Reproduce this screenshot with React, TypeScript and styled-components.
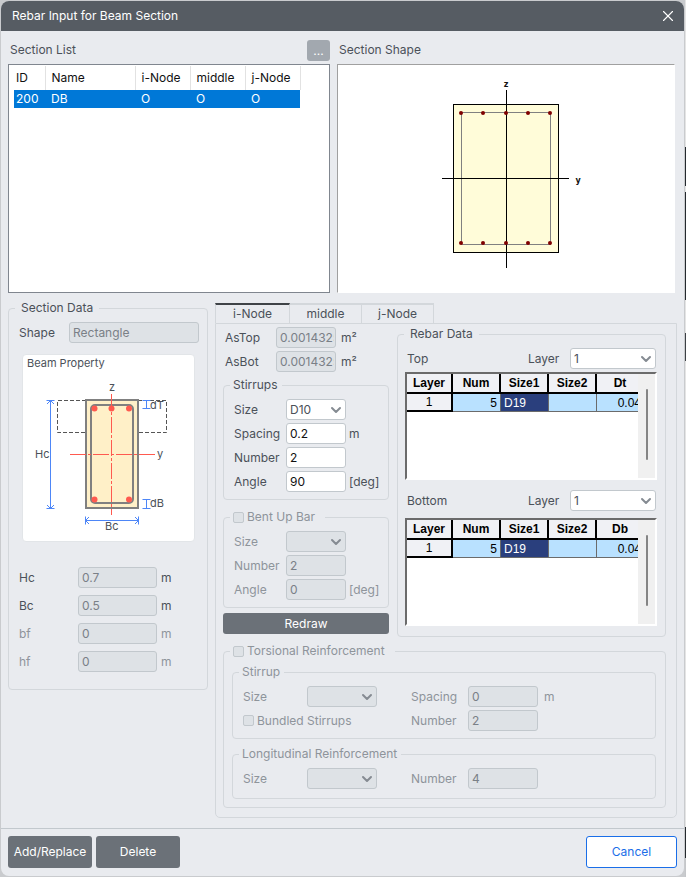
import React, { useId } from "react";
import styled, { createGlobalStyle } from "styled-components";
import { ChevronDown, X } from "lucide-react";

const color = {
  surface: "#e9ebef",
  title: "#565c63",
  text: "#4b5159",
  muted: "#8e949b",
  line: "#d3d7db",
  field: "#c2c8cd",
  fieldOff: "#dee2e6",
  button: "#6b7178",
  accent: "#1a6ee8",
};

const GlobalStyle = createGlobalStyle`
  *, *::before, *::after { box-sizing: border-box; }
  body {
    margin: 0;
    background: #c4c6c9;
    color: ${color.text};
    font: 12px/16px Inter, "Noto Sans", sans-serif;
  }
  button, input, select { font: inherit; color: inherit; }
`;

const Desktop = styled.div`
  min-height: 100vh;
  display: flex;
  padding: 1px 2px 1px 1px;
  background: linear-gradient(
      #e4e4e4 147px, #24292e 147px, #24292e 186px, #e4e4e4 186px, #e4e4e4 192px,
      #24292e 192px, #24292e 300px, #e4e4e4 300px, #e4e4e4 333px, #3c4045 333px,
      #3c4045 361px, #e4e4e4 361px, #e4e4e4 827px, #24292e 827px, #24292e 858px, #c4c6c9 858px
    ) right / 1px 100% no-repeat, #c9cbce;
`;

const Dialog = styled.main`
  flex: 1;
  min-width: 0;
  display: flex;
  flex-direction: column;
  background: ${color.surface};
  border-radius: 8px;
  overflow: hidden;
`;

const TitleBar = styled.header`
  height: 30px;
  display: flex;
  align-items: center;
  justify-content: space-between;
  padding: 0 7px 0 11px;
  background: ${color.title};
  color: #fff;
`;

const Heading = styled.h1`
  margin: 0;
  font-size: 12px;
  font-weight: 400;
`;

const CloseButton = styled.button`
  display: flex;
  padding: 0;
  border: 0;
  background: none;
`;

const Content = styled.div`
  flex: 1;
  display: flex;
  flex-direction: column;
  gap: 10px;
  padding: 9px 7px 9px 7px;
`;

const TopArea = styled.div`
  display: grid;
  grid-template-columns: 322fr 338fr;
  gap: 7px;
  padding-right: 2px;
`;

const Panel = styled.section`
  display: flex;
  flex-direction: column;
  gap: 3px;
  min-width: 0;
`;

const PanelHead = styled.div`
  height: 21px;
  display: flex;
  align-items: center;
  justify-content: space-between;
  padding-left: 2px;
`;

const PanelTitle = styled.h2`
  margin: 0;
  padding-bottom: 2px;
  font-size: 12px;
  font-weight: 400;
`;

const MoreButton = styled.button`
  width: 23px;
  height: 21px;
  padding: 0;
  border: 0;
  border-radius: 3px;
  background: #a2a8af;
  color: #fff;
`;

const ListBox = styled.div`
  height: 229px;
  padding: 1px 0 0 5px;
  border: 1px solid #80868f;
  background: #fff;
`;

const ListTable = styled.table`
  table-layout: fixed;
  width: 286px;
  border-collapse: collapse;
  color: #111;

  th, td {
    padding: 0 0 0 6px;
    font-weight: 400;
    text-align: left;
  }
  th { height: 24px; border-right: 1px solid #e2e2e2; }
  th:first-child, td:first-child { padding-left: 2px; }
  td { height: 18px; background: #0078d7; color: #fff; }
`;

const Column = styled.col<{ $w: number }>`
  width: ${(p) => p.$w}px;
`;

const ShapeBox = styled.div`
  height: 229px;
  border: 1px solid #fff;
  border-top-color: #a0a0a0;
  border-left-color: #a0a0a0;
  background: #fff;

  svg { display: block; width: 100%; height: 100%; }
`;

const LowerArea = styled.div`
  display: grid;
  grid-template-columns: 200px minmax(0, 1fr);
  align-items: start;
  gap: 7px;
`;

const Group = styled.fieldset<{ $muted?: boolean }>`
  min-width: 0;
  margin: 0;
  padding: 0;
  border: 1px solid ${color.line};
  border-radius: 4px;
  color: ${(p) => (p.$muted ? color.muted : color.text)};
`;

const GroupBody = styled.div<{ $pad: string }>`
  padding: ${(p) => p.$pad};
`;

const Legend = styled.legend<{ $left?: number; $right?: number }>`
  height: 16px;
  margin-left: 6px;
  padding: 0 ${(p) => p.$right ?? 4}px 0 ${(p) => p.$left ?? 3}px;
`;

const SectionColumn = styled.div`
  margin-top: -3px;
`;

const CheckLabel = styled.label`
  display: flex;
  align-items: center;
  gap: 3px;
  height: 16px;
`;

const CheckBox = styled.input`
  appearance: none;
  width: 11px;
  height: 11px;
  margin: 0;
  border: 1px solid ${color.field};
  border-radius: 2px;
  background: ${color.fieldOff};
`;

const Rows = styled.div<{ $gap?: number }>`
  display: flex;
  flex-direction: column;
  gap: ${(p) => p.$gap ?? 3}px;
`;

const Row = styled.div<{ $cols: string }>`
  display: grid;
  grid-template-columns: ${(p) => p.$cols};
  align-items: center;
  height: 21px;
  white-space: nowrap;
`;

const FieldLabel = styled.label<{ $muted?: boolean }>`
  ${(p) => p.$muted && `color: ${color.muted};`}
`;

const Unit = styled.span<{ $muted?: boolean; $gap?: number }>`
  padding-left: ${(p) => p.$gap ?? 3}px;
  ${(p) => p.$muted && `color: ${color.muted};`}
`;

const TextBox = styled.input`
  width: 100%;
  height: 21px;
  min-width: 0;
  padding: 0 1px 0 3px;
  border: 1px solid ${color.field};
  border-radius: 3px;
  background: #fff;
  color: #111;

  &:disabled { background: ${color.fieldOff}; color: #7a8087; }
`;

const SelectFrame = styled.span`
  display: grid;
  align-items: center;

  > * { grid-area: 1 / 1; }
  > svg {
    justify-self: end;
    margin-right: 2px;
    color: #858b92;
    pointer-events: none;
  }
`;

const SelectBox = styled.select`
  appearance: none;
  width: 100%;
  height: 21px;
  padding: 0 16px 0 3px;
  border: 1px solid ${color.field};
  border-radius: 3px;
  background: #fff;

  &:disabled { background: ${color.fieldOff}; opacity: 1; }
`;

const Card = styled.div`
  width: 173px;
  height: 188px;
  margin: 11px 0 25px 3px;
  border: 1px solid #e2e5e8;
  border-radius: 4px;
  background: #fff;

  svg { display: block; }
`;

const TabList = styled.div`
  display: flex;
  height: 20px;
`;

const Tab = styled.button<{ $active?: boolean }>`
  width: ${(p) => (p.$active ? 75 : 72)}px;
  padding: 0;
  border: 1px solid ${color.line};
  border-top: 2px solid ${(p) => (p.$active ? "#3f4347" : color.line)};
  border-bottom: 0;
  border-left-width: ${(p) => (p.$active ? 1 : 0)}px;
  background: ${color.surface};
`;

const TabPanel = styled.div`
  display: flex;
  flex-direction: column;
  gap: 6px;
  padding: 2px 10px 9px 7px;
  border: 1px solid ${color.line};
  border-radius: 0 0 5px 5px;
`;

const NodeArea = styled.div`
  display: grid;
  grid-template-columns: 166px minmax(0, 1fr);
  align-items: start;
  gap: 8px;
`;

const NodeColumn = styled.div`
  display: flex;
  flex-direction: column;
  padding-top: 1px;
`;

const AreaRows = styled(Rows)`
  padding-left: 2px;
  margin-bottom: 5px;
`;

const StirrupGroup = styled(Group)`
  margin-bottom: 9px;
`;

const RedrawButton = styled.button`
  height: 21px;
  margin-top: 5px;
  padding: 0;
  border: 0;
  border-radius: 3px;
  background: ${color.button};
  color: #fff;
`;

const LayerRow = styled(Row)`
  padding: 0 1px 0 2px;
`;

const Sheet = styled.div`
  display: flex;
  height: 108px;
  margin: 3px 0 10px;
  overflow: hidden;
  border: 2px solid #fff;
  border-top: 2px solid #6b6b6b;
  border-left: 2px solid #6b6b6b;
  background: #fff;

  &:last-child { margin: 7px 0 0; }
`;

const SheetClip = styled.div`
  flex: 1;
  min-width: 0;
  overflow: hidden;
`;

const SheetTable = styled.table`
  table-layout: fixed;
  width: 238px;
  border-collapse: separate;
  border-spacing: 0;
  color: #000;
  font: 12px/16px "Liberation Sans", Arial, sans-serif;

  th, td { height: 18px; padding: 0 3px; }
  thead th {
    height: 20px;
    background: #f0f1f5;
    border-right: 2px solid #000;
    border-bottom: 2px solid #000;
  }
  tbody th {
    background: #f0f1f5;
    border-right: 2px solid #000;
    border-bottom: 2px solid #000;
    font-weight: 400;
  }
  td {
    background: #b9e1ff;
    border-right: 1px solid #6b6b6b;
    border-bottom: 1px solid #6b6b6b;
    text-align: right;
  }
`;

const SelectedCell = styled.td`
  && { background: #2a3f7d; color: #fff; text-align: left; }
`;

const ScrollTrack = styled.div`
  width: 17px;
  padding: 15px 7px 18px 8px;
  background: #f0f0f0;
`;

const ScrollThumb = styled.div`
  height: 71px;
  border-radius: 1px;
  background: #858585;
`;

const Footer = styled.footer`
  display: flex;
  gap: 4px;
  padding: 7px 7px 8px;
  border-top: 1px solid #c2c8cd;
`;

const ActionButton = styled.button<{ $outlined?: boolean }>`
  width: ${(p) => (p.$outlined ? 91 : 84)}px;
  height: 32px;
  margin-left: ${(p) => (p.$outlined ? "auto" : "0")};
  padding: 0;
  border: ${(p) => (p.$outlined ? `1px solid ${color.accent}` : "0")};
  border-radius: 3px;
  background: ${(p) => (p.$outlined ? "#fff" : color.button)};
  color: ${(p) => (p.$outlined ? color.accent : "#fff")};
`;

type FieldProps = {
  label: string;
  value?: string;
  unit?: string;
  cols: string;
  kind?: "text" | "select";
  off?: boolean;
  muted?: boolean;
  unitGap?: number;
};

function Select({ id, value, off }: { id: string; value?: string; off?: boolean }) {
  return (
    <SelectFrame>
      <SelectBox id={id} disabled={off} defaultValue={value}>
        <option>{value}</option>
      </SelectBox>
      <ChevronDown size={16} strokeWidth={3} aria-hidden />
    </SelectFrame>
  );
}

function FieldParts({ label, value = "", unit, kind = "text", off, muted, unitGap }: Omit<FieldProps, "cols">) {
  const id = useId();
  return (
    <>
      <FieldLabel htmlFor={id} $muted={muted}>{label}</FieldLabel>
      {kind === "select" ? (
        <Select id={id} value={value} off={off} />
      ) : (
        <TextBox id={id} defaultValue={value} disabled={off} />
      )}
      {unit && <Unit $muted={muted} $gap={unitGap}>{unit}</Unit>}
    </>
  );
}

function Field({ cols, ...rest }: FieldProps) {
  return (
    <Row $cols={cols}>
      <FieldParts {...rest} />
    </Row>
  );
}

function Check({ children }: { children: React.ReactNode }) {
  return (
    <CheckLabel>
      <CheckBox type="checkbox" disabled />
      {children}
    </CheckLabel>
  );
}

function LayerSheet({ side, depth }: { side: string; depth: string }) {
  const id = useId();
  return (
    <>
      <LayerRow $cols="minmax(0, 1fr) 42px 86px">
        <span>{side}</span>
        <FieldLabel htmlFor={id}>Layer</FieldLabel>
        <Select id={id} value="1" />
      </LayerRow>
      <Sheet>
        <SheetClip>
          <SheetTable aria-label={`${side} rebar`}>
            <colgroup>
              <Column $w={46} /><Column $w={48} /><Column $w={48} /><Column $w={48} /><Column $w={48} />
            </colgroup>
            <thead>
              <tr><th>Layer</th><th>Num</th><th>Size1</th><th>Size2</th><th>{depth}</th></tr>
            </thead>
            <tbody>
              <tr><th>1</th><td>5</td><SelectedCell>D19</SelectedCell><td /><td>0.04</td></tr>
            </tbody>
          </SheetTable>
        </SheetClip>
        <ScrollTrack><ScrollThumb /></ScrollTrack>
      </Sheet>
    </>
  );
}

function SectionShape() {
  const xs = [461, 483, 506, 528, 550];
  return (
    <svg viewBox="338 65 336 227" role="img" aria-label="Section shape">
      <rect x="453.5" y="104.5" width="105" height="148" fill="#fffcd9" stroke="#000" />
      <rect x="461.5" y="112.5" width="89" height="132" fill="none" stroke="#808080" />
      <path d="M506.5 90V268M442 178.5H569" stroke="#000" />
      {[113, 243].map((y) => xs.map((x) => <circle key={`${x}-${y}`} cx={x} cy={y} r="2" fill="#800000" />))}
      <g fontFamily="DejaVu Sans" fontSize="8" fontWeight="700" fill="#111" textAnchor="middle">
        <text x="506" y="87">z</text>
        <text x="578" y="183">y</text>
      </g>
    </svg>
  );
}

function BeamDrawing() {
  return (
    <svg width="171" height="186" viewBox="23 355 171 186" fill="none" role="img" aria-label="Beam property">
      <path d="M86 400.5H57.5V432.5H86M138 400.5H166.5V432.5H138" stroke="#555" strokeDasharray="4 2" />
      <rect x="86" y="400" width="52" height="108" fill="#fff0c8" stroke="#808080" strokeWidth="2" />
      <rect x="91" y="405" width="42" height="98" rx="4" stroke="#808080" strokeWidth="2" />
      <g stroke="#ff5a4f" strokeDasharray="16 2 3 2">
        <path d="M111.5 394V515" />
        <path d="M70 454.5H156" />
      </g>
      <g fill="#ff5a4f">
        <circle cx="94.5" cy="408.5" r="3" />
        <circle cx="111.5" cy="408.5" r="3" />
        <circle cx="129" cy="408.5" r="3" />
        <circle cx="94.5" cy="499.5" r="3" />
        <circle cx="129" cy="499.5" r="3" />
      </g>
      <g stroke="#4d86f7">
        <path d="M50.5 400V508M46.5 400.5H54.5M46.5 508.5H54.5M47 404L50.5 400.5L54 404M47 505L50.5 508.5L54 505" />
        <path d="M85.5 520.5H138.5M85.5 516.5V524.5M138.5 516.5V524.5M89 517L85.5 520.5L89 524M135 517L138.5 520.5L135 524" />
        <path d="M146.5 400.5V408.5M142.5 400.5H150.5M142.5 408.5H150.5" />
        <path d="M146.5 499.5V508.5M142.5 499.5H150.5M142.5 508.5H150.5" />
      </g>
      <g fontFamily="Inter" fontSize="11" fill="#4b5159">
        <text x="27" y="367">Beam Property</text>
        <text x="109" y="391">z</text>
        <text x="157" y="458">y</text>
        <text x="35" y="458">Hc</text>
        <text x="105" y="530">Bc</text>
        <text x="150" y="409">dT</text>
        <text x="150" y="507">dB</text>
      </g>
    </svg>
  );
}

const dims = [
  { label: "Hc", value: "0.7" },
  { label: "Bc", value: "0.5" },
  { label: "bf", value: "0", muted: true },
  { label: "hf", value: "0", muted: true },
];

const nodeCols = "52px 60px 1fr";
const torsionCols = "64px 70px 34px 57px 70px 1fr";

export default function App() {
  return (
    <>
      <GlobalStyle />
      <Desktop>
        <Dialog>
          <TitleBar>
            <Heading>Rebar Input for Beam Section</Heading>
            <CloseButton aria-label="Close"><X size={18} strokeWidth={1.5} /></CloseButton>
          </TitleBar>
          <Content>
            <TopArea>
              <Panel>
                <PanelHead>
                  <PanelTitle>Section List</PanelTitle>
                  <MoreButton>...</MoreButton>
                </PanelHead>
                <ListBox>
                  <ListTable>
                    <colgroup>
                      <Column $w={31} /><Column $w={90} /><Column $w={55} /><Column $w={55} /><Column $w={55} />
                    </colgroup>
                    <thead>
                      <tr><th>ID</th><th>Name</th><th>i-Node</th><th>middle</th><th>j-Node</th></tr>
                    </thead>
                    <tbody>
                      <tr><td>200</td><td>DB</td><td>O</td><td>O</td><td>O</td></tr>
                    </tbody>
                  </ListTable>
                </ListBox>
              </Panel>
              <Panel>
                <PanelHead><PanelTitle>Section Shape</PanelTitle></PanelHead>
                <ShapeBox><SectionShape /></ShapeBox>
              </Panel>
            </TopArea>

            <LowerArea>
              <SectionColumn>
                <Group>
                  <Legend $left={6} $right={6}>Section Data</Legend>
                  <GroupBody $pad="6px 8px 17px 10px">
                    <Field label="Shape" value="Rectangle" cols="50px 1fr" off />
                    <Card><BeamDrawing /></Card>
                    <Rows $gap={7}>
                      {dims.map((d) => (
                        <Field key={d.label} {...d} unit="m" cols="59px 79px 1fr" off unitGap={4} />
                      ))}
                    </Rows>
                  </GroupBody>
                </Group>
              </SectionColumn>

              <div>
                <TabList role="tablist">
                  <Tab role="tab" aria-selected $active>i-Node</Tab>
                  <Tab role="tab">middle</Tab>
                  <Tab role="tab">j-Node</Tab>
                </TabList>
                <TabPanel role="tabpanel">
                  <NodeArea>
                    <NodeColumn>
                      <AreaRows>
                        <Field label="AsTop" value="0.0014325" unit="m²" cols="51px 60px 1fr" off unitGap={5} />
                        <Field label="AsBot" value="0.0014325" unit="m²" cols="51px 60px 1fr" off unitGap={5} />
                      </AreaRows>
                      <StirrupGroup>
                        <Legend>Stirrups</Legend>
                        <GroupBody $pad="6px 0 7px 10px">
                          <Rows>
                            <Field label="Size" value="D10" kind="select" cols={nodeCols} />
                            <Field label="Spacing" value="0.2" unit="m" cols={nodeCols} />
                            <Field label="Number" value="2" cols={nodeCols} />
                            <Field label="Angle" value="90" unit="[deg]" cols={nodeCols} />
                          </Rows>
                        </GroupBody>
                      </StirrupGroup>
                      <Group $muted>
                        <Legend $right={10}><Check>Bent Up Bar</Check></Legend>
                        <GroupBody $pad="6px 0 7px 10px">
                          <Rows>
                            <Field label="Size" kind="select" cols={nodeCols} off />
                            <Field label="Number" value="2" cols={nodeCols} off />
                            <Field label="Angle" value="0" unit="[deg]" cols={nodeCols} off />
                          </Rows>
                        </GroupBody>
                      </Group>
                      <RedrawButton>Redraw</RedrawButton>
                    </NodeColumn>
                    <Group>
                      <Legend $left={6} $right={6}>Rebar Data</Legend>
                      <GroupBody $pad="6px 8px 10px 7px">
                        <LayerSheet side="Top" depth="Dt" />
                        <LayerSheet side="Bottom" depth="Db" />
                      </GroupBody>
                    </Group>
                  </NodeArea>

                  <Group $muted>
                    <Legend $right={10}><Check>Torsional Reinforcement</Check></Legend>
                    <GroupBody $pad="5px 9px 8px 8px">
                      <Rows $gap={7}>
                        <Group $muted>
                          <Legend>Stirrup</Legend>
                          <GroupBody $pad="6px 0 7px 10px">
                            <Rows>
                              <Row $cols={torsionCols}>
                                <FieldParts label="Size" kind="select" off />
                                <span />
                                <FieldParts label="Spacing" value="0" unit="m" off unitGap={6} />
                              </Row>
                              <Row $cols="168px 57px 70px">
                                <Check>Bundled Stirrups</Check>
                                <FieldParts label="Number" value="2" off />
                              </Row>
                            </Rows>
                          </GroupBody>
                        </Group>
                        <Group $muted>
                          <Legend>Longitudinal Reinforcement</Legend>
                          <GroupBody $pad="6px 0 9px 10px">
                            <Row $cols={torsionCols}>
                              <FieldParts label="Size" kind="select" off />
                              <span />
                              <FieldParts label="Number" value="4" off />
                            </Row>
                          </GroupBody>
                        </Group>
                      </Rows>
                    </GroupBody>
                  </Group>
                </TabPanel>
              </div>
            </LowerArea>
          </Content>
          <Footer>
            <ActionButton>Add/Replace</ActionButton>
            <ActionButton>Delete</ActionButton>
            <ActionButton $outlined>Cancel</ActionButton>
          </Footer>
        </Dialog>
      </Desktop>
    </>
  );
}
